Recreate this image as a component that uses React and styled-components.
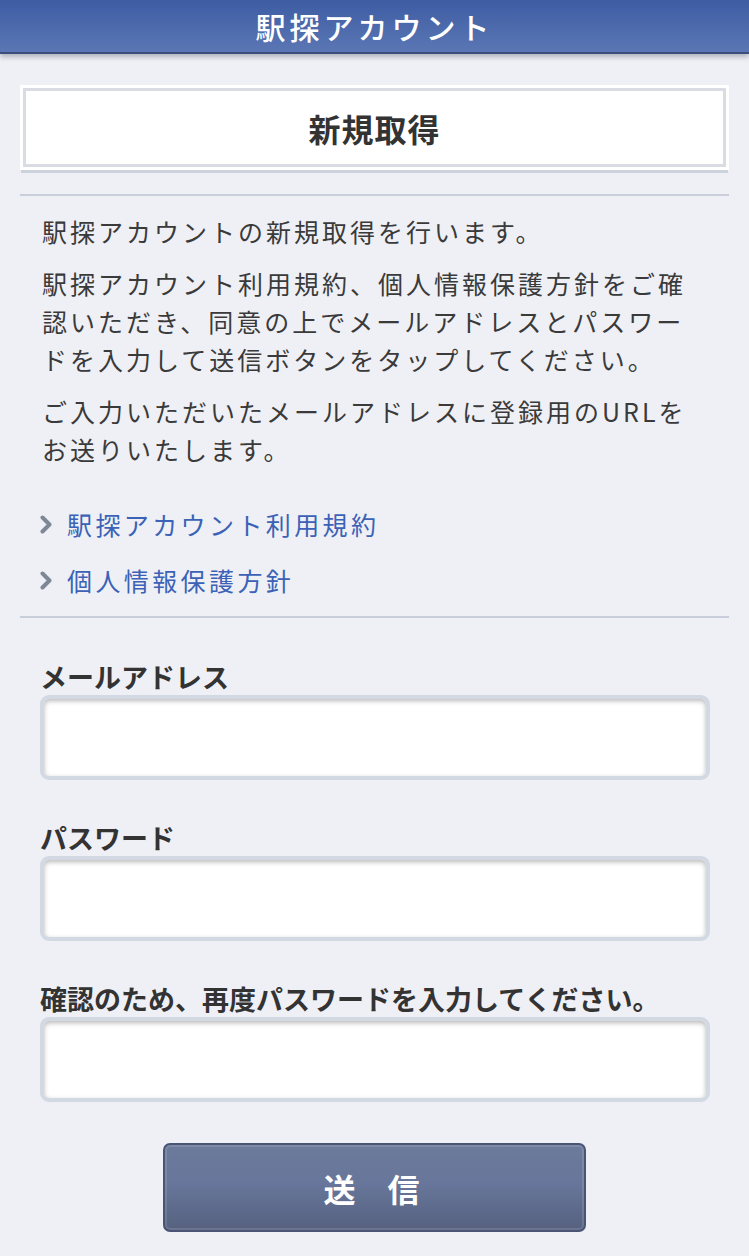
import React from 'react'
import styled, { createGlobalStyle } from 'styled-components'

const GlobalStyle = createGlobalStyle`
  html, body {
    margin: 0;
    padding: 0;
    background: #eff0f5;
  }
  body {
    font-family: "Noto Sans CJK JP", "Noto Sans", sans-serif;
    color: #333;
  }
`

const Page = styled.div`
  width: 749px;
  min-height: 1256px;
  background: #eff0f5;
`

const Header = styled.header`
  height: 52px;
  background: linear-gradient(#3e5ca3, #5a76b4);
  border-bottom: 2px solid #3d4e7c;
  box-shadow: 0 3px 5px rgba(60, 70, 90, 0.35);
  display: flex;
  align-items: center;
  justify-content: center;
`

const HeaderTitle = styled.h1`
  margin: 0;
  color: #fff;
  font-size: 30px;
  font-weight: 500;
  letter-spacing: 4px;
  line-height: 1;
`

const Content = styled.main`
  padding: 31px 20px 0;
`

const TitleBox = styled.div`
  background: #fff;
  padding: 3px;
  box-shadow: 0 4px 0 -1px #cbd2dc;
`

const TitleInner = styled.div`
  border: 3px solid #d9dde3;
  height: 73px;
  display: flex;
  align-items: center;
  justify-content: center;
  font-size: 32px;
  font-weight: 700;
  color: #333;
  letter-spacing: 1px;
`

const Rule = styled.hr`
  margin: ${p => p.$top || 0}px 0 0;
  border: 0;
  height: 2px;
  background: #c9cfda;
`

const Intro = styled.div`
  padding: 16px 0 0 22px;
`

const Para = styled.p`
  margin: 0 0 14px;
  font-size: 25px;
  line-height: 38px;
  letter-spacing: 3px;
  color: #3a3a3a;
  white-space: nowrap;
`

const LinkList = styled.ul`
  list-style: none;
  margin: 28px 0 0;
  padding: 0 0 0 20px;
`

const LinkItem = styled.li`
  height: 56px;
  display: flex;
  align-items: center;
  gap: 14px;
`

const LinkText = styled.a`
  color: #3b62b6;
  font-size: 25px;
  letter-spacing: 3.4px;
  text-decoration: none;
`

const Form = styled.form`
  padding: 41px 0 0 20px;
  display: flex;
  flex-direction: column;
`

const Label = styled.label`
  display: block;
  font-size: 27px;
  font-weight: 700;
  line-height: 36px;
  letter-spacing: 0;
  color: #333;
  margin-top: ${p => p.$top || 0}px;
`

const Input = styled.input`
  box-sizing: border-box;
  width: 670px;
  height: 85px;
  border: 4px solid #d2d9e2;
  border-radius: 9px;
  background: #fff;
  box-shadow: inset 0 2px 5px rgba(0, 0, 0, 0.28);
  font-size: 26px;
  padding: 0 14px;
  outline: none;
`

const SubmitRow = styled.div`
  display: flex;
  justify-content: center;
  padding: 41px 20px 0 0;
`

const Submit = styled.button`
  width: 423px;
  height: 89px;
  border: 2px solid #4a5576;
  border-radius: 7px;
  background: linear-gradient(#6c7b9b 0%, #67769a 45%, #56617f 100%);
  box-shadow: inset 0 0 0 2px rgba(255, 255, 255, 0.12);
  color: #fff;
  font-family: "Noto Sans CJK JP", sans-serif;
  font-size: 32px;
  font-weight: 700;
  letter-spacing: 32px;
  padding-left: 32px;
`

const Chevron = () => (
  <svg width="13" height="19" viewBox="0 0 13 19">
    <path d="M2.5 2.5 L9.5 9.5 L2.5 16.5" fill="none" stroke="#7d8795" strokeWidth="4" strokeLinecap="round" strokeLinejoin="round" />
  </svg>
)

export default function App() {
  return (
    <Page>
      <GlobalStyle />
      <Header>
        <HeaderTitle>駅探アカウント</HeaderTitle>
      </Header>
      <Content>
        <TitleBox>
          <TitleInner>新規取得</TitleInner>
        </TitleBox>
        <Rule $top={24} />
        <Intro>
          <Para>駅探アカウントの新規取得を行います。</Para>
          <Para>
            駅探アカウント利用規約、個人情報保護方針をご確<br />
            認いただき、同意の上でメールアドレスとパスワー<br />
            ドを入力して送信ボタンをタップしてください。
          </Para>
          <Para>
            ご入力いただいたメールアドレスに登録用のURLを<br />
            お送りいたします。
          </Para>
        </Intro>
        <LinkList>
          <LinkItem>
            <Chevron />
            <LinkText href="#">駅探アカウント利用規約</LinkText>
          </LinkItem>
          <LinkItem>
            <Chevron />
            <LinkText href="#">個人情報保護方針</LinkText>
          </LinkItem>
        </LinkList>
        <Rule $top={8} />
        <Form onSubmit={e => e.preventDefault()}>
          <Label>メールアドレス</Label>
          <Input type="email" />
          <Label $top={40}>パスワード</Label>
          <Input type="password" />
          <Label $top={40}>確認のため、再度パスワードを入力してください。</Label>
          <Input type="password" />
          <SubmitRow>
            <Submit type="submit">送信</Submit>
          </SubmitRow>
        </Form>
      </Content>
    </Page>
  )
}
